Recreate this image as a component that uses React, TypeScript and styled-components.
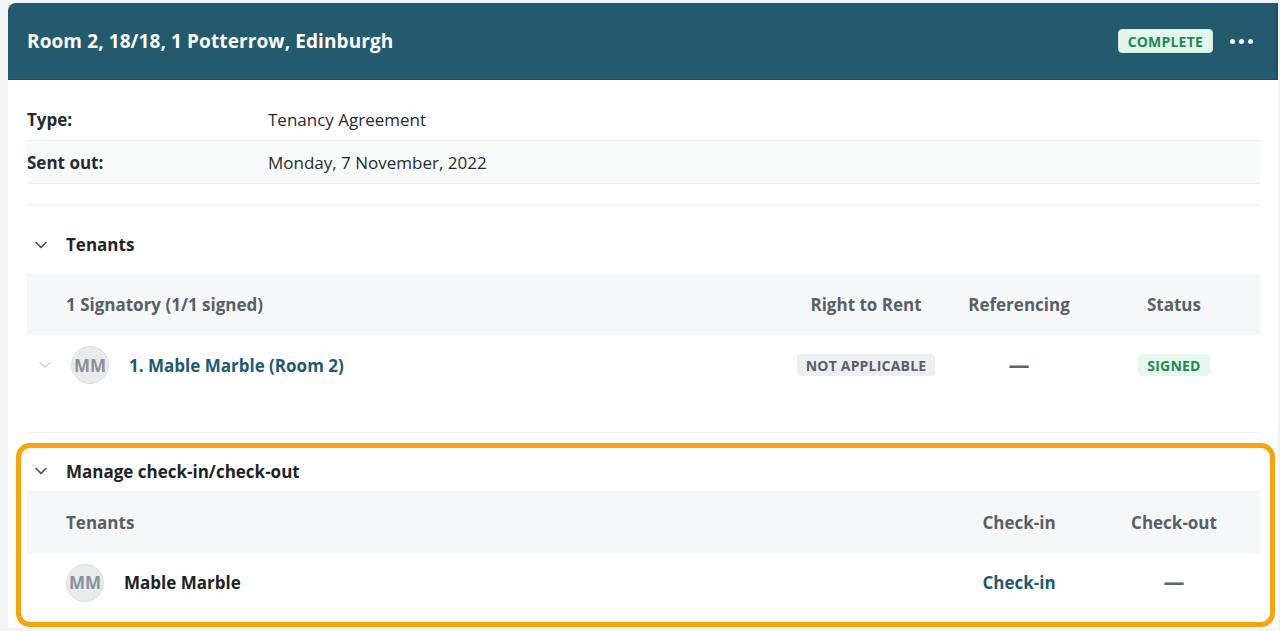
import React from "react";
import styled, { createGlobalStyle } from "styled-components";

const Global = createGlobalStyle`
  html, body { margin: 0; padding: 0; }
  body {
    background: #f2f4f6;
    font-family: "Open Sans", "Noto Sans", Arial, sans-serif;
    color: #22272c;
    -webkit-font-smoothing: antialiased;
  }
`;

const Page = styled.div`
  padding: 3px 2px 0 8px;
  height: 628px;
  box-sizing: border-box;
  overflow: hidden;
`;

const Panel = styled.div`
  background: #ffffff;
  border-radius: 8px 0 0 0;
  overflow: hidden;
  height: 100%;
`;

const Header = styled.header`
  height: 77px;
  background: #245a6e;
  display: flex;
  align-items: center;
  padding: 0 23px 0 19px;
  border-right: 2px solid #1f4f61;
  border-bottom: 1px solid #1f4f61;
  box-sizing: border-box;
`;

const Title = styled.h1`
  flex: 1;
  margin: 0;
  color: #ffffff;
  font-size: 19px;
  font-weight: 700;
  letter-spacing: 0.1px;
`;

const Badge = styled.span<{ $tone: "green" | "grey" | "greenLight" }>`
  display: inline-flex;
  align-items: center;
  justify-content: center;
  height: 22px;
  padding: 0 9px;
  border-radius: 4px;
  font-size: 14px;
  font-weight: 700;
  letter-spacing: 0.2px;
  text-transform: uppercase;
  background: ${(p) =>
    p.$tone === "grey" ? "#eceef0" : p.$tone === "green" ? "#e3f6ee" : "#e6f7ef"};
  color: ${(p) => (p.$tone === "grey" ? "#585f67" : "#1d8a52")};
  border: ${(p) => (p.$tone === "green" ? "1px solid #cdeedd" : "none")};
`;

const Dots = styled.button`
  display: flex;
  gap: 4px;
  margin-left: 17px;
  padding: 0;
  background: none;
  border: none;
  span {
    width: 5px;
    height: 5px;
    border-radius: 50%;
    background: #ffffff;
  }
`;

const Body = styled.div`
  padding: 18px 18px 0 19px;
`;

const InfoRow = styled.div<{ $shade?: boolean }>`
  display: grid;
  grid-template-columns: 241px 1fr;
  align-items: center;
  height: 43px;
  box-sizing: border-box;
  border-bottom: 1px solid #eef1f2;
  background: ${(p) => (p.$shade ? "#f8fbfa" : "transparent")};
  font-size: 17px;
`;

const InfoLabel = styled.span`
  font-weight: 700;
  color: #262b30;
`;

const InfoValue = styled.span`
  color: #262b30;
`;

const Spacer = styled.div<{ $h: number }>`
  height: ${(p) => p.$h}px;
`;

const Divider = styled.hr`
  border: none;
  height: 1px;
  background: #eef0f2;
  margin: 0;
`;

const Section = styled.section<{ $highlight?: boolean }>`
  ${(p) =>
    p.$highlight
      ? `
    border: 5px solid #f7a50b;
    border-radius: 14px;
    margin: 10px -15px 0 -11px;
    padding: 0 10px 10px 6px;
  `
      : ``}
`;

const SectionHead = styled.div<{ $h: number; $top: number }>`
  display: flex;
  align-items: center;
  box-sizing: border-box;
  height: ${(p) => p.$h}px;
  padding-top: ${(p) => p.$top}px;
  font-size: 17px;
  font-weight: 700;
  color: #1e2328;
`;

const Chevron = styled.svg<{ $faint?: boolean }>`
  width: 12px;
  height: 8px;
  margin: ${(p) => (p.$faint ? "0 20px 0 12px" : "0 19px 0 8px")};
  flex: none;
  stroke: ${(p) => (p.$faint ? "#cfd3d7" : "#4a5057")};
`;

const Grid = styled.div<{ $cols: string; $h: number; $band?: boolean }>`
  display: grid;
  grid-template-columns: ${(p) => p.$cols};
  align-items: center;
  height: ${(p) => p.$h}px;
  background: ${(p) => (p.$band ? "#f6f7f9" : "transparent")};
  font-size: 17px;
`;

const HeadCell = styled.div<{ $center?: boolean }>`
  font-weight: 700;
  color: #585f66;
  text-align: ${(p) => (p.$center ? "center" : "left")};
  padding-left: ${(p) => (p.$center ? "0" : "39px")};
`;

const Cell = styled.div`
  display: flex;
  justify-content: center;
  align-items: center;
`;

const PersonCell = styled.div<{ $pad: number }>`
  display: flex;
  align-items: center;
  padding-left: ${(p) => p.$pad}px;
`;

const Avatar = styled.span`
  width: 38px;
  height: 38px;
  border-radius: 50%;
  background: #e8eaec;
  border: 1px solid #dcdfe2;
  box-sizing: border-box;
  display: inline-flex;
  align-items: center;
  justify-content: center;
  font-size: 17px;
  font-weight: 700;
  color: #8b9198;
  margin-right: 20px;
  flex: none;
`;

const Link = styled.a`
  color: #1c5a72;
  font-weight: 700;
  text-decoration: none;
`;

const Name = styled.span`
  color: #1d2226;
  font-weight: 700;
`;

const Dash = styled.span`
  color: #5d646b;
  font-size: 21px;
  font-weight: 700;
  line-height: 1;
`;

const ChevronIcon = ({ faint }: { faint?: boolean }) => (
  <Chevron $faint={faint} viewBox="0 0 12 8" fill="none" strokeWidth={faint ? 1.4 : 1.6}>
    <path d="M1 1.5 L6 6.3 L11 1.5" strokeLinecap="round" strokeLinejoin="round" />
  </Chevron>
);

const tenantCols = "1fr 168px 138px 172px";
const checkCols = "1fr 138px 172px";

export default function App() {
  return (
    <>
      <Global />
      <Page>
        <Panel>
          <Header>
            <Title>Room 2, 18/18, 1 Potterrow, Edinburgh</Title>
            <Badge $tone="green">Complete</Badge>
            <Dots aria-label="More">
              <span />
              <span />
              <span />
            </Dots>
          </Header>
          <Body>
            <InfoRow>
              <InfoLabel>Type:</InfoLabel>
              <InfoValue>Tenancy Agreement</InfoValue>
            </InfoRow>
            <InfoRow $shade>
              <InfoLabel>Sent out:</InfoLabel>
              <InfoValue>Monday, 7 November, 2022</InfoValue>
            </InfoRow>
            <Spacer $h={20} />
            <Divider />

            <Section>
              <SectionHead $h={69} $top={10}>
                <ChevronIcon />
                Tenants
              </SectionHead>
              <Grid $cols={tenantCols} $h={61} $band>
                <HeadCell>1 Signatory (1/1 signed)</HeadCell>
                <HeadCell $center>Right to Rent</HeadCell>
                <HeadCell $center>Referencing</HeadCell>
                <HeadCell $center>Status</HeadCell>
              </Grid>
              <Grid $cols={tenantCols} $h={60}>
                <PersonCell $pad={0}>
                  <ChevronIcon faint />
                  <Avatar>MM</Avatar>
                  <Link href="#">1. Mable Marble (Room 2)</Link>
                </PersonCell>
                <Cell>
                  <Badge $tone="grey">Not applicable</Badge>
                </Cell>
                <Cell>
                  <Dash>—</Dash>
                </Cell>
                <Cell>
                  <Badge $tone="greenLight">Signed</Badge>
                </Cell>
              </Grid>
            </Section>
            <Spacer $h={37} />
            <Divider />

            <Section $highlight>
              <SectionHead $h={43} $top={3}>
                <ChevronIcon />
                Manage check-in/check-out
              </SectionHead>
              <Grid $cols={checkCols} $h={62} $band>
                <HeadCell>Tenants</HeadCell>
                <HeadCell $center>Check-in</HeadCell>
                <HeadCell $center>Check-out</HeadCell>
              </Grid>
              <Grid $cols={checkCols} $h={59}>
                <PersonCell $pad={39}>
                  <Avatar>MM</Avatar>
                  <Name>Mable Marble</Name>
                </PersonCell>
                <Cell>
                  <Link href="#">Check-in</Link>
                </Cell>
                <Cell>
                  <Dash>—</Dash>
                </Cell>
              </Grid>
            </Section>
          </Body>
        </Panel>
      </Page>
    </>
  );
}
